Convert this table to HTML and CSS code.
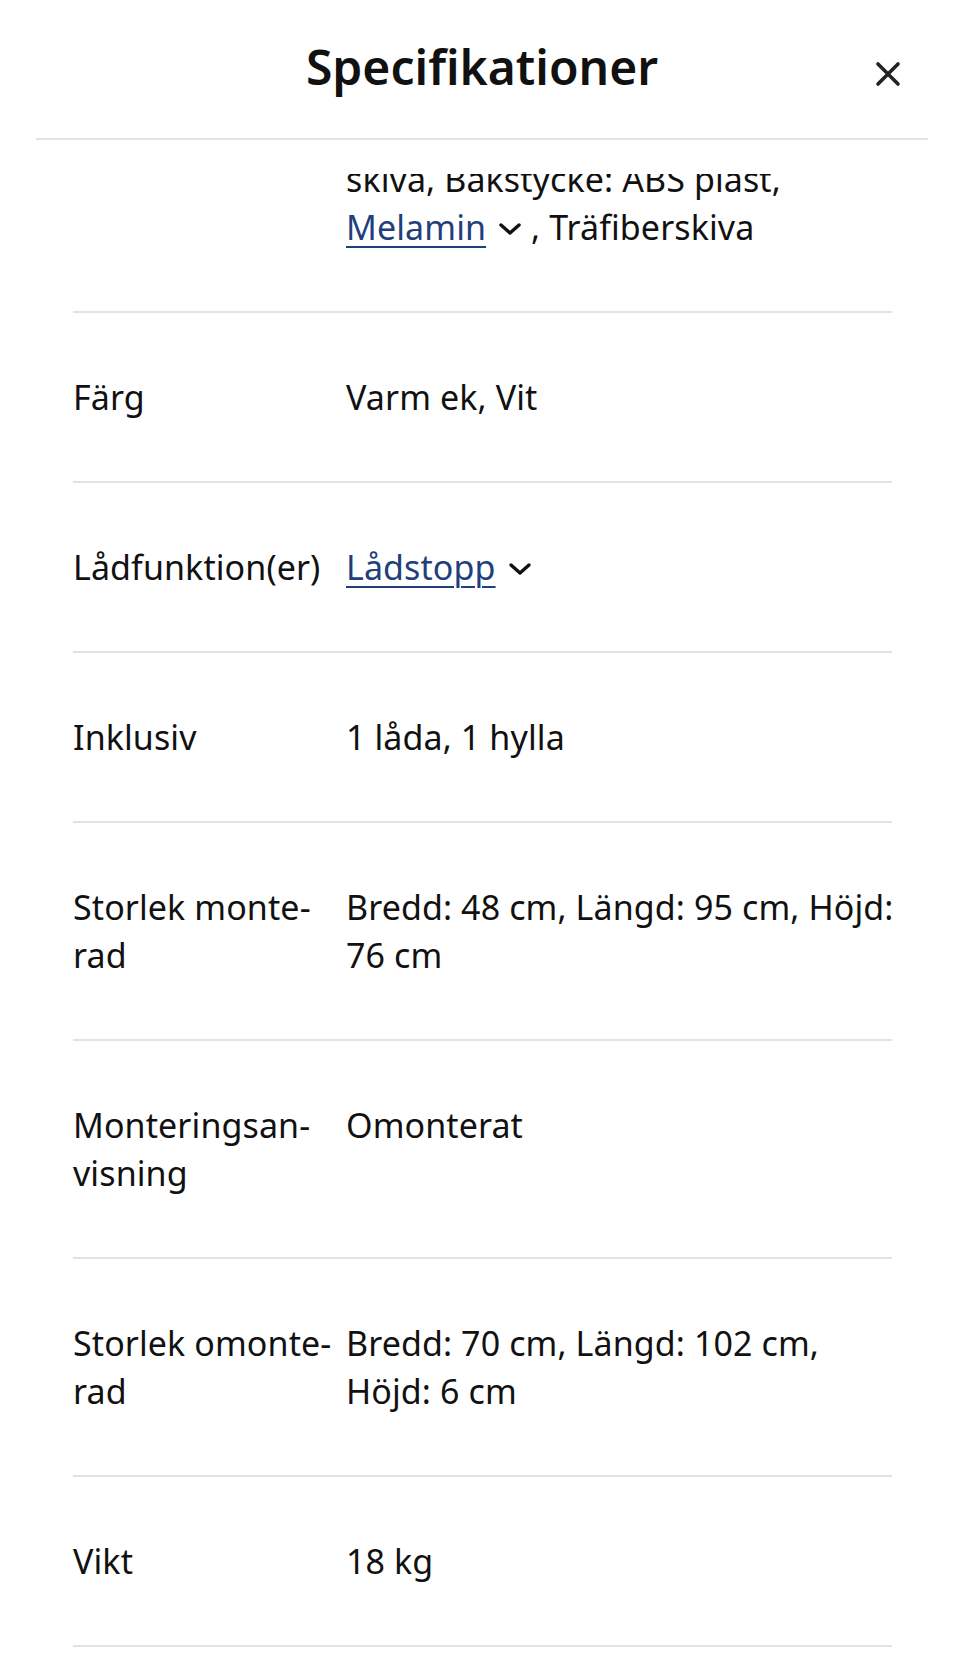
FILE: index.html
```html
<!DOCTYPE html>
<html lang="sv">
<head>
<meta charset="utf-8">
<title>Specifikationer</title>
<link rel="stylesheet" href="styles.css">
</head>
<body>
<div class="sheet">
  <header class="header">
    <span class="spacer"></span>
    <h1 class="title">Specifikationer</h1>
    <button class="close" aria-label="Stäng">
      <svg viewBox="0 0 26 26" width="26" height="26"><path d="M3 3 L23 23 M23 3 L3 23" stroke="#222" stroke-width="3.6" stroke-linecap="round" fill="none"/></svg>
    </button>
  </header>
  <div class="viewport">
    <dl class="specs">
      <div class="row">
        <dt class="label">Material</dt>
        <dd class="value">Bordsskiva: Spån-<br>skiva, Bakstycke: ABS plast, <span class="nw"><a class="link" href="#">Melamin</a><svg class="chev" viewBox="0 0 24 14" width="24" height="14"><path d="M3 3 L12 11 L21 3" stroke="#111" stroke-width="3.4" stroke-linecap="round" stroke-linejoin="round" fill="none"/></svg></span> , Träfiberskiva</dd>
      </div>
      <div class="row">
        <dt class="label">Färg</dt>
        <dd class="value">Varm ek, Vit</dd>
      </div>
      <div class="row">
        <dt class="label">Lådfunktion(er)</dt>
        <dd class="value"><span class="nw"><a class="link" href="#">Lådstopp</a><svg class="chev" viewBox="0 0 24 14" width="24" height="14"><path d="M3 3 L12 11 L21 3" stroke="#111" stroke-width="3.4" stroke-linecap="round" stroke-linejoin="round" fill="none"/></svg></span></dd>
      </div>
      <div class="row">
        <dt class="label">Inklusiv</dt>
        <dd class="value">1 låda, 1 hylla</dd>
      </div>
      <div class="row">
        <dt class="label">Storlek monte&shy;rad</dt>
        <dd class="value">Bredd: 48 cm, Längd: 95 cm, Höjd: 76&nbsp;cm</dd>
      </div>
      <div class="row">
        <dt class="label">Monteringsan&shy;visning</dt>
        <dd class="value">Omonterat</dd>
      </div>
      <div class="row">
        <dt class="label">Storlek omonte&shy;rad</dt>
        <dd class="value">Bredd: 70 cm, Längd: 102 cm, Höjd: 6&nbsp;cm</dd>
      </div>
      <div class="row">
        <dt class="label">Vikt</dt>
        <dd class="value">18 kg</dd>
      </div>
    </dl>
  </div>
</div>
</body>
</html>
```
FILE: styles.css
```css
* { box-sizing: border-box; }
html, body { margin: 0; padding: 0; background: #fff; }
body {
  font-family: "Noto Sans", "Open Sans", sans-serif;
  color: #111;
}
.sheet {
  width: 960px;
  height: 1667px;
  overflow: hidden;
  display: flex;
  flex-direction: column;
}
.header {
  margin: 0 32px 0 36px;
  height: 140px;
  border-bottom: 2px solid #e2e2e2;
  display: grid;
  grid-template-columns: 1fr auto 1fr;
  align-items: center;
  flex: none;
}
.title {
  margin: 0;
  font-size: 48px;
  font-weight: 600;
  line-height: 1;
  padding-bottom: 4px;
}
.close {
  justify-self: end;
  margin-right: 27px;
  background: none;
  border: 0;
  padding: 0;
  width: 26px;
  height: 26px;
  display: flex;
  margin-top: 10px;
}
.viewport {
  margin-top: 34px;
  flex: 1;
  overflow: hidden;
}
.specs {
  margin: -127px 68px 0 73px;
  padding: 0;
}
.row {
  display: grid;
  grid-template-columns: 273px 1fr;
  padding: 60px 0;
  border-bottom: 2px solid #dfe2e6;
  font-size: 34px;
  line-height: 48px;
  letter-spacing: 0.1px;
}
.label {
  margin: 0;
  padding-right: 10px;
  hyphens: manual;
}
.value {
  margin: 0;
  margin-right: -12px;
}
.nw { white-space: nowrap; }
.link {
  color: #213f7b;
  text-decoration: underline;
  text-decoration-thickness: 2px;
  text-underline-offset: 6px;
}
.chev {
  display: inline-block;
  margin-left: 12px;
  vertical-align: 4px;
}
```
